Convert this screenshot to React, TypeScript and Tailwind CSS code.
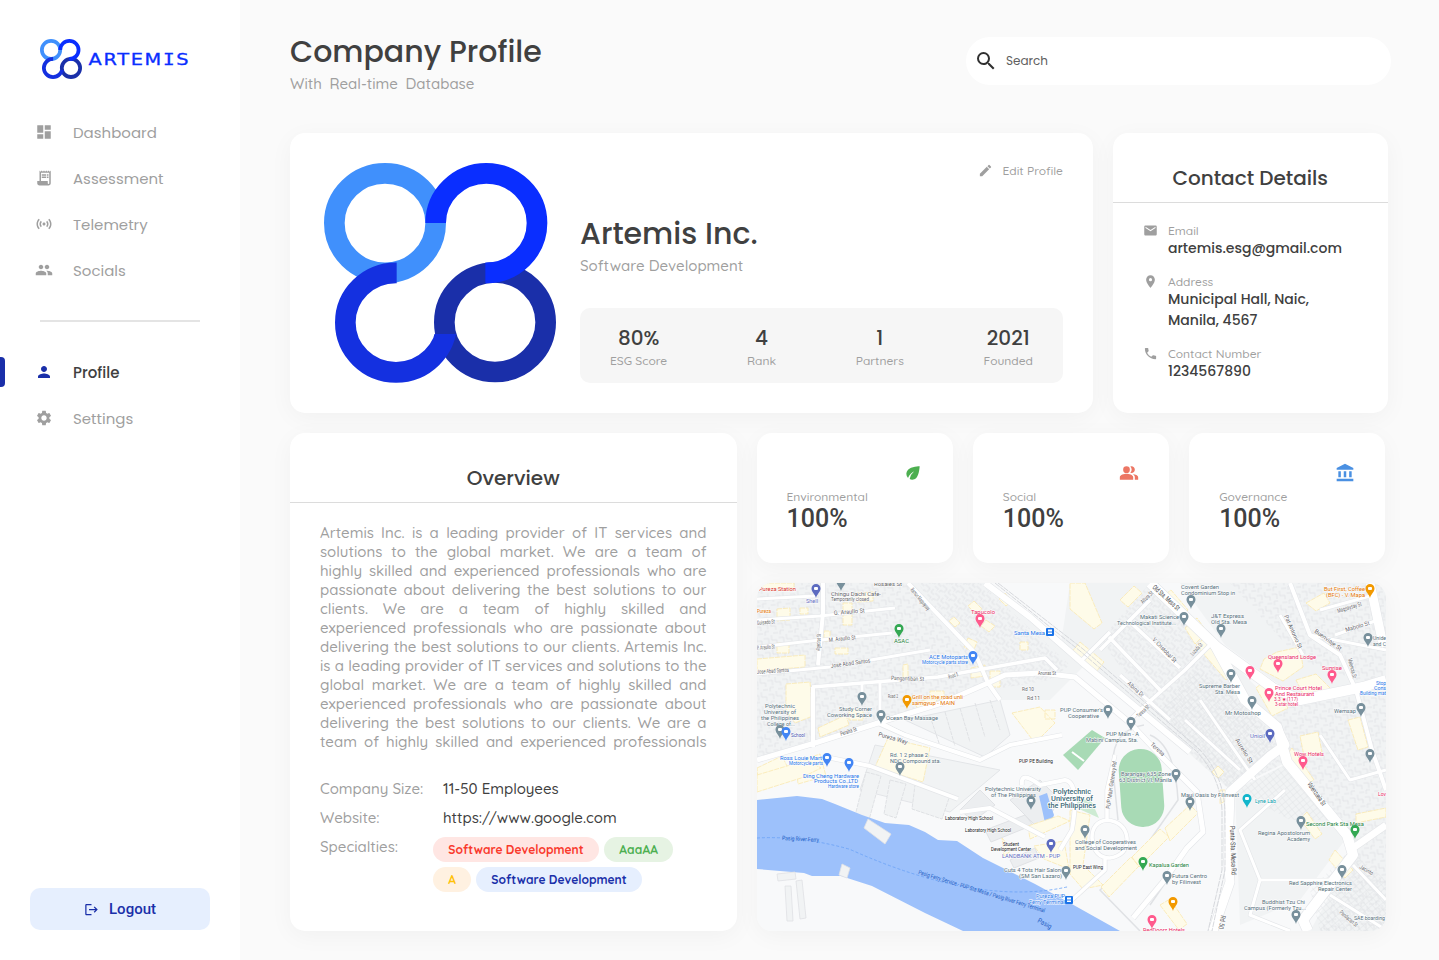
import React from "react";
import {
  MdDashboard, MdReceiptLong, MdSensors, MdPeople, MdPerson, MdSettings, MdSearch, MdEdit, MdEmail,
  MdLocationOn, MdPhone, MdEco, MdPeopleAlt, MdAccountBalance, MdLogout,
} from "react-icons/md";

const POP = "font-['Poppins','Inter',sans-serif]";
const QS = "font-['Quicksand','Lato',sans-serif]";
const CARD = "shrink-0 bg-white rounded-[15px] shadow-[0_5px_25px_rgba(0,0,0,0.04)]";

function Mark({ className, id }: { className: string; id: string }) {
  return (
    <svg className={className} viewBox="42 39 696 659" preserveAspectRatio="none" fill="none" strokeWidth="62">
      <defs>
        <clipPath id={id + "a"}><path d="M300 0H800V420H526V219H300Z" /></clipPath>
        <clipPath id={id + "b"}><path d="M0 300H260V551H800V720H0Z" /></clipPath>
      </defs>
      <ellipse cx="225" cy="219" rx="152" ry="149" stroke="#4090fc" />
      <ellipse cx="555" cy="516" rx="152" ry="149" stroke="#1a2fa9" />
      <ellipse cx="529" cy="219" rx="152" ry="149" stroke="#0a2eff" clipPath={`url(#${id}a)`} />
      <ellipse cx="258" cy="517" rx="152" ry="149" stroke="#1430e0" clipPath={`url(#${id}b)`} />
    </svg>
  );
}

type NavProps = { icon: React.ReactNode; label: string; active?: boolean };
function NavItem({ icon, label, active }: NavProps) {
  return (
    <div className={"relative flex h-[46px] items-center pl-[35px] text-[15px] " + (active ? "font-medium text-[#404040]" : "text-[#9f9f9f]")}>
      {active && <span className="absolute left-0 top-2 h-[30px] w-[5px] rounded-r-[4px] bg-[#1a2fa9]" />}
      <span className={"w-[38px] text-[18px] " + (active ? "text-[#1a2fa9]" : "")}>{icon}</span>
      <span className={POP + " pt-[3px]"}>{label}</span>
    </div>
  );
}

const stats = [["80%", "ESG Score"], ["4", "Rank"], ["1", "Partners"], ["2021", "Founded"]];

const overview = [
  "Artemis Inc. is a leading provider of IT services and",
  "solutions to the global market. We are a team of",
  "highly skilled and experienced professionals who are",
  "passionate about delivering the best solutions to our",
  "clients. We are a team of highly skilled and",
  "experienced professionals who are passionate about",
  "delivering the best solutions to our clients. Artemis Inc.",
  "is a leading provider of IT services and solutions to the",
  "global market. We are a team of highly skilled and",
  "experienced professionals who are passionate about",
  "delivering the best solutions to our clients. We are a",
  "team of highly skilled and experienced professionals",
];

const SLATE = "#546e7a", BLUE = "#1a73e8", PINK = "#e91e63", GREEN = "#188038", ORANGE = "#e37400", INDIGO = "#5c6bc0", GREY = "#5f6368";

/* text, x, y (baseline), width, colour, size, rotation */
type Label = [string, number, number, number, string, number?, number?];
const labels: Label[] = [
  ["Pureza Station", 759, 591, 37, "#d93025"],
  ["Shell", 806, 603, 12, INDIGO],
  ["Chingu Dachi Cafe-", 831, 596, 50, GREY],
  ["Temporarily closed", 831, 601, 38, GREY, 5],
  ["Pureza", 757, 613, 14, ORANGE],
  ["G. Araullo St", 834, 615, 31, GREY, 6, -5],
  ["Guisado St", 757, 625, 18, GREY, 6, -5],
  ["M. Araullo St", 829, 642, 27, GREY, 6, -6],
  ["P. Araullo St", 757, 650, 18, GREY, 6, -5],
  ["Jose Abad Santos", 831, 668, 40, GREY, 6, -8],
  ["Jose Abad Santos", 757, 674, 32, GREY, 6, -4],
  ["Algeciras St", 820, 651, 17, GREY, 6, -87],
  ["Pangantiban St", 891, 680, 33, GREY, 6, 2],
  ["Road 5", 949, 679, 10, GREY, 6, -18],
  ["Road 2", 888, 698, 10, GREY, 6],
  ["Peralta St", 841, 736, 17, GREY, 6, -18],
  ["Anonas St", 1038, 675, 18, GREY, 6],
  ["Rd 10", 1022, 691, 12, GREY, 6],
  ["Rd 11", 1027, 700, 13, GREY, 6],
  ["Ramon Magsaysay", 910, 590, 27, GREY, 6, 50],
  ["Rosales St", 874, 586, 28, GREY, 6],
  ["ASAC", 894, 643, 15, GREEN],
  ["Tapucolo", 971, 614, 24, PINK],
  ["Santa Mesa", 1014, 635, 31, BLUE],
  ["ACE Motoparts", 929, 659, 39, BLUE],
  ["Motorcycle parts store", 922, 664, 46, BLUE, 5],
  ["Polytechnic", 765, 708, 30, SLATE],
  ["University of", 764, 714, 32, SLATE],
  ["the Philippines", 761, 720, 38, SLATE],
  ["College of...", 767, 726, 28, SLATE],
  ["School", 791, 737, 14, "#3949ab"],
  ["Study Corner", 839, 711, 33, SLATE],
  ["Coworking Space", 827, 717, 45, SLATE],
  ["Grill on the road unli", 912, 699, 51, ORANGE],
  ["samgyup - MAIN", 912, 705, 43, ORANGE],
  ["Ocean Bay Massage", 886, 720, 52, SLATE],
  ["Ross Louie Mart", 780, 760, 42, BLUE],
  ["Motorcycle parts", 789, 765, 34, BLUE, 5],
  ["Ding Cheng Hardware", 803, 778, 56, BLUE],
  ["Products Co.,LTD", 814, 783, 44, BLUE],
  ["Hardware store", 828, 788, 31, BLUE, 5],
  ["Rd. 1 2 phase 2", 890, 757, 38, SLATE],
  ["NDC Compound sta.", 890, 763, 51, SLATE],
  ["PUP PE Building", 1019, 763, 34, "#202124", 5],
  ["Polytechnic University", 985, 791, 56, SLATE],
  ["of The Philippines", 991, 797, 45, SLATE],
  ["Laboratory High School", 945, 820, 48, "#202124", 5],
  ["Laboratory High School", 965, 832, 46, "#202124", 5],
  ["Student", 1003, 846, 16, "#202124", 5],
  ["Development Center", 991, 851, 40, "#202124", 5],
  ["LANDBANK ATM - PUP", 1002, 858, 58, INDIGO],
  ["Cuts 4 Tots Hair Salon", 1004, 872, 57, SLATE],
  ["(SM San Lazaro)", 1019, 878, 43, SLATE],
  ["Pureza PUP", 1036, 898, 29, BLUE],
  ["Ferry Terminal", 1029, 904, 36, BLUE],
  ["Pasig River Ferry", 782, 840, 37, "#2360c4", 6, 3],
  ["Pasig Ferry Service - PUP Sta Mesa / Pasig River Ferry Terminal", 918, 874, 132, "#2360c4", 6, 17],
  ["Pasig", 1037, 922, 15, "#2360c4", 7, 28],
  ["Covent Garden", 1181, 589, 38, SLATE],
  ["Condominium Stop in", 1181, 595, 54, SLATE],
  ["Makati Science", 1140, 619, 39, SLATE],
  ["Technological Institute...", 1117, 625, 59, SLATE],
  ["J&T Express", 1211, 618, 33, SLATE],
  ["Old Sta. Mesa", 1211, 624, 36, SLATE],
  ["But First, Coffee", 1324, 591, 41, ORANGE],
  ["(BFC) - V. Mapa", 1326, 597, 39, ORANGE],
  ["Old Sta. Mesa St", 1152, 588, 34, "#3c4043", 7, 42],
  ["Altura St", 1143, 604, 15, GREY, 6, -45],
  ["V. Cristobal St", 1152, 640, 32, GREY, 6, 46],
  ["Lozada St", 1193, 656, 15, GREY, 6, -48],
  ["Albina Dr", 1127, 684, 20, GREY, 6, 42],
  ["Teresa St", 1139, 718, 15, GREY, 6, -45],
  ["Magsaysay St", 1338, 613, 25, GREY, 6, -17],
  ["Mabolo St", 1346, 632, 25, GREY, 6, -17],
  ["Pat Antonio St", 1284, 616, 36, GREY, 6, 66],
  ["Buenviaje St", 1314, 632, 32, GREY, 6, 36],
  ["Valencia St", 1348, 659, 20, GREY, 6, 76],
  ["Unide", 1373, 640, 13, SLATE],
  ["and C", 1373, 646, 13, SLATE],
  ["Queensland Lodge", 1268, 659, 48, PINK],
  ["Sunrise", 1322, 670, 20, PINK],
  ["Supreme Barber", 1199, 688, 41, SLATE],
  ["Sta. Mesa", 1215, 694, 25, SLATE],
  ["Prince Court Hotel", 1275, 690, 47, PINK],
  ["And Restaurant", 1275, 696, 39, PINK],
  ["3.3 ★ (117)", 1274, 701, 24, PINK, 5],
  ["3-star hotel", 1275, 706, 23, PINK, 5],
  ["Mr Motoshop", 1225, 715, 36, SLATE],
  ["Wemsap", 1334, 713, 22, SLATE],
  ["Stop", 1376, 685, 10, BLUE],
  ["Cons", 1374, 690, 12, BLUE],
  ["Building mat", 1360, 695, 26, BLUE, 5],
  ["PUP Consumer's", 1060, 712, 43, SLATE],
  ["Cooperative", 1068, 718, 31, SLATE],
  ["PUP Main - A", 1106, 736, 33, SLATE],
  ["Mabini Campus, Sta.", 1086, 742, 52, SLATE],
  ["Unioil", 1250, 738, 15, INDIGO],
  ["Wow Hotels", 1294, 756, 30, PINK],
  ["Barangay 635 Zone", 1121, 776, 50, SLATE],
  ["63 District VI, Manila", 1119, 782, 53, SLATE],
  ["Maui Oasis by Filinvest", 1181, 797, 58, SLATE],
  ["Lyne Lab", 1255, 803, 21, "#0097a7"],
  ["Lov", 1378, 796, 8, PINK],
  ["PUP Main Gateway Rd", 1110, 809, 48, GREY, 6, -82],
  ["Punta-Sta. Mesa Rd", 1230, 826, 49, "#3c4043", 7, 88],
  ["Valenzuela St", 1307, 784, 27, "#3c4043", 7, 55],
  ["Second Park Sta Mesa", 1306, 826, 58, GREEN],
  ["Regina Apostolorum", 1258, 835, 52, SLATE],
  ["Academy", 1287, 841, 23, SLATE],
  ["College of Cooperatives", 1075, 844, 61, SLATE],
  ["and Social Development", 1075, 850, 62, SLATE],
  ["Kapalua Garden", 1149, 867, 40, GREEN],
  ["PUP East Wing", 1073, 869, 30, "#202124", 5],
  ["Futura Centro", 1172, 878, 35, SLATE],
  ["by Filinvest", 1172, 884, 29, SLATE],
  ["Red Sapphire Electronics", 1289, 885, 63, SLATE],
  ["Repair Center", 1318, 891, 34, SLATE],
  ["Buddhist Tzu Chi", 1262, 904, 43, SLATE],
  ["Campus (Formerly Tzu...", 1244, 910, 62, SLATE],
  ["SAE boarding", 1354, 920, 31, SLATE],
  ["RedDoorz Hotels", 1143, 932, 42, PINK],
  ["Pandacan St", 1339, 913, 22, GREY, 6, 40],
  ["Rd 50", 1221, 915, 14, GREY, 7, 100],
  ["Jacinto", 1359, 868, 15, GREY, 6, 30],
  ["Aurelio St", 1235, 740, 28, GREY, 6, 58],
  ["Teresa", 1150, 745, 17, GREY, 6, 42],
  ["Pureza Way", 878, 736, 30, GREY, 6, 16],
];

const pins: [number, number, string][] = [
  [816, 591, INDIGO], [841, 584, "#78909c"], [899, 631, "#34a853"], [980, 621, "#ff5a8d"], [973, 658, "#4285f4"],
  [862, 699, "#78909c"], [907, 702, "#f29900"], [881, 717, "#78909c"], [780, 732, "#78909c"], [786, 734, "#4285f4"],
  [827, 760, "#4285f4"], [849, 765, "#4285f4"], [900, 769, "#78909c"], [1031, 803, "#78909c"], [1051, 846, INDIGO],
  [1066, 873, "#78909c"], [1191, 602, "#78909c"], [1184, 619, "#78909c"], [1221, 631, "#78909c"], [1370, 591, "#f29900"],
  [1368, 640, "#78909c"], [1278, 666, "#ff5a8d"], [1250, 673, "#ff5a8d"], [1332, 677, "#ff5a8d"], [1231, 676, "#78909c"],
  [1269, 695, "#ff5a8d"], [1252, 703, "#78909c"], [1361, 710, "#78909c"], [1270, 736, INDIGO], [1108, 712, "#78909c"],
  [1131, 724, "#78909c"], [1303, 763, "#ff5a8d"], [1370, 756, "#78909c"], [1176, 776, "#78909c"], [1190, 804, "#78909c"],
  [1247, 801, "#12b5cb"], [1301, 823, "#78909c"], [1355, 832, "#34a853"], [1085, 832, "#78909c"], [1143, 864, "#34a853"],
  [1167, 878, "#78909c"], [1342, 872, "#78909c"], [1296, 917, "#78909c"], [1173, 904, "#f29900"], [1152, 922, "#ff5a8d"],
];

const buildings = [
  "M757 583h37v5h-37zM777 609l13-1v12l-13 1zM800 608l8 0v6l-8 0zM843 603l9 0v22l-9 0zM857 593l16-1v9l-16 1zM824 631h6v10h-6zM835 648h13v6h-13z",
  "M757 659l48-4v12l-48 4zM777 643h12v10h-12zM757 768l25-12 10 20-33 12zM796 762l24-8 6 22-28 8zM786 684l24-2 3 34-18 7-9-12z",
  "M818 728l28-13 3 10-29 12zM849 710h14v10h-14zM757 775l50-15 14 8-20 10-44 14zM888 738l42 10-7 34-48-15z",
  "M903 665l5-1v13l-5 1zM915 703l20-6 4 9-20 6zM954 617l6 6-5 4-6-6zM974 601l8 8-6 5-8-8zM986 620l9 6-6 6-8-6zM1020 642h8v8h-8z",
  "M968 638l9 4-4 10-9-5zM971 668l14-3v11l-14 2zM930 691h14v8h-14zM990 671h10v16h-10zM999 599l6-6 7 8-6 5z",
  "M1012 713l28-6 15 16-20 20zM1045 710h10v9h-10zM1070 583h15l17 40-8 6-24-20zM1196 645l10-8 28 35-8 8zM1161 598l10-8 17 20-8 8zM1185 628l12-10 10 14-12 12z",
  "M1277 652l23-5 3 20-20 14-23-12 4-10zM1256 688l12-10 20 30-16 8zM1296 680l20-6 18 18-27 10zM1306 603l18-10 6 10-14 8z",
  "M1300 736l18-4 4 20-18 4zM1348 720l12-3 8 30-10 3zM1285 757l17 30 12-7-22-32zM1307 812l15 22-7 5-15-20z",
  "M1070 810l20 5-7 50 20 20-20 4-13-15zM1165 828l25-23 8 8-28 28zM1132 857l28-28 9 8-30 30zM1101 887l30-30 8 9-30 31z",
  "M1160 905l10-6 17 25-8 6zM1356 814l30-6v9l-30 6zM1028 826l30-10 12 5-40 18zM1034 846l30-5 5 28-25-10zM1002 838l10 12-8 6z",
  "M1212 772l6-6 6 6-6 6zM1220 790l10 0v8l-10 6zM1080 642l24 20-8 10-26-18zM1120 600l14-14 8 7-14 14zM1335 850l18 20-8 8-16-18z",
];

const roads: [string, number][] = [
  ["M823 583V613L818 665", 4], ["M908 583L975 653L988 683L1000 700", 4],
  ["M757 760L815 743L878 723L942 703L988 683L1005 675L1040 673L1075 677L1130 723L1160 755L1197 792L1203 832L1187 848L1163 882L1133 918", 5],
  ["M812 687L938 677L1045 658L1057 670", 3.5], ["M813 747V687", 4], ["M862 683V700M880 680V722L905 735", 3],
  ["M757 620L820 616L895 608M757 647L820 640L892 633M757 674L830 667L900 655L930 650M757 599L815 596", 3],
  ["M985 583L1030 617L1085 665L1190 752", 6], ["M1150 583L1217 647L1273 688L1300 700L1363 687L1386 680", 10],
  ["M1215 645L1245 700L1277 727L1287 762L1347 835L1353 855L1303 920L1308 931", 10],
  ["M1277 728L1285 745L1270 756L1230 792L1228 855L1230 882L1213 931", 9], ["M1353 848L1386 825", 7],
  ["M1370 583L1382 640L1386 645", 9], ["M1290 583L1310 635L1340 655L1356 690L1372 750L1386 790", 4],
  ["M1310 635L1386 650M1320 610L1370 596M1335 635L1378 620M1280 615L1303 655", 3],
  ["M1210 645L1185 670L1140 710L1128 722M1150 600L1100 650M1130 622L1180 668M1109 637L1160 690M1120 675L1170 720M1082 660L1110 632", 3.5],
  ["M826 757L870 766L958 799M878 723L905 735L980 760L1010 745L1062 735", 4],
  ["M960 812L990 808L1045 837M1022 785Q1020 770 1040 785L1065 780Q1080 782 1072 830L1060 850", 4],
  ["M1107 820Q1092 822 1092 838Q1094 858 1110 858Q1128 855 1127 838Q1125 822 1107 820M1107 820L1107 790L1115 755M1105 858V870L1072 900", 3.5],
  ["M1200 700L1255 780M1185 720L1240 770M1285 790L1240 830L1260 880L1330 880M1320 735L1350 780L1386 770M1353 865L1386 900M1330 895L1386 930M1260 880L1250 915L1290 931", 3],
];

function GlyphPin({ x, y, c }: { x: number; y: number; c: string }) {
  return (
    <g transform={`translate(${x} ${y})`}>
      <path d="M0 7C-1 3-4.500 1-4.500-2.500A4.500 4.500 0 1 1 4.500-2.500C4.500 1 1 3 0 7Z" fill={c} />
      <rect x="-2" y="-4" width="4" height="3" rx="1" fill="#fff" />
    </g>
  );
}

function CityMap() {
  return (
    <svg className="block h-[348px] w-[629px] shrink-0 rounded-[15px] shadow-[0_5px_25px_rgba(0,0,0,0.04)]" viewBox="757 583 629 348" fontFamily="Roboto, sans-serif">
      <defs>
        <pattern id="blk" width="15" height="14" patternUnits="userSpaceOnUse" patternTransform="rotate(-5)">
          <path d="M0 3h5v5M8 0v5h5v4M2 14v-4h4M10 12h5" fill="none" stroke="#dfe1e4" strokeWidth=".8" />
        </pattern>
        <pattern id="diag" width="13" height="11" patternUnits="userSpaceOnUse" patternTransform="rotate(42)">
          <path d="M0 2h6v5M9 0v4h4M2 10v-3h3M8 8h5v3" fill="none" stroke="#dfe1e4" strokeWidth=".8" />
        </pattern>
        <pattern id="fine" width="5" height="5" patternUnits="userSpaceOnUse" patternTransform="rotate(50)">
          <path d="M0 0h5M0 0v5" stroke="#dfe1e4" strokeWidth=".8" />
        </pattern>
      </defs>
      <rect x="757" y="583" width="629" height="348" fill="#f8f9fa" />
      <path d="M757 583H908L975 653L988 683L942 703L813 747L757 760Z" fill="#f1f3f4" />
      <path d="M757 583H908L975 653L988 683L942 703L813 747L757 760Z" fill="url(#blk)" />
      <path d="M908 583H985L1085 665L1050 700L1000 700Z" fill="#f1f3f4" />
      <path d="M918 583H980L1070 665L1050 680L990 690Z" fill="url(#diag)" />
      <path d="M1070 583H1150L1270 700L1287 762L1230 790L1180 745L1060 650Z" fill="#f1f3f4" />
      <path d="M1100 640L1150 583L1250 700L1287 762L1230 790L1180 745Z" fill="url(#diag)" />
      <path d="M1160 710L1195 670L1240 700L1280 755L1230 790Z" fill="url(#fine)" />
      <path d="M1180 583H1386V690L1300 700L1225 645Z" fill="#f1f3f4" />
      <path d="M1230 583H1386V690L1300 660Z" fill="url(#blk)" />
      <path d="M1250 700L1386 690V931H1310L1353 855L1287 762Z" fill="#f1f3f4" />
      <path d="M1270 710L1386 690V931H1320L1353 855L1287 762Z" fill="url(#blk)" />
      <path d="M1235 790L1285 765L1345 840L1300 900L1240 925Z" fill="#f1f3f4" />
      <path d="M1235 790L1285 765L1330 820L1290 820Z" fill="url(#fine)" />
      <path d="M1310 890L1350 850L1386 880V931H1320Z" fill="url(#fine)" />
      <path d="M875 745L1000 770L950 812L860 790ZM905 720L1000 700L1010 735L985 757Z" fill="#f1f3f4" stroke="#e3e5e8" />
      <path d="M866 772l15 4-12 44-14-4zM890 780l16 4-10 34-12-4zM915 785l35 10-8 24-30-10zM930 716l10 30M945 712l10 34M960 708l10 34M975 703l10 34M990 700l10 30" fill="#f1f3f4" stroke="#dfe1e4" strokeDasharray="4 1" />
      <path d="M1010 800L1040 780L1060 800L1040 830ZM985 830l40-15 8 10-42 17zM1010 860l25-12 4 10-25 10zM960 810l20-20 15 15-22 16z" fill="#eceef0" stroke="#e0e2e5" />
      <path d="M757 800L797 796L822 799L835 804L862 815L885 823L909 825L925 832L938 840L957 841L983 858L1035 884L1070 903L1120 931H963L925 913L872 886L841 876L812 876L804 873L757 869Z" fill="#9dc1fb" />
      <path d="M1039 796l8-3 3 10 4 12-4 10-5-2-3-14z" fill="#9dc1fb" />
      <path d="M868 819l23 15-6 10-21-16zM842 864l8 4-3 10-8-3zM777 874l18-2 1 7-18 2zM785 886h6l2 35h-6zM796 881l6-1 4 38-6 1z" fill="#f1f3f4" stroke="#dfe1e4" strokeWidth=".8" />
      <path d="M757 864Q800 860 850 872Q980 925 1069 902" transform="translate(0 -26) rotate(2 757 864)" fill="none" stroke="#6ba2f6" strokeDasharray="3 2" strokeWidth=".8" />
      <path d="M1092 730l13 8-27 32-15-15z" fill="#a8dab5" />
      <path d="M1073 798l18 2 8 18-22-10z" fill="#cdebd3" />
      <path d="M1072 752l12 9" stroke="#fff" strokeWidth="2" />
      <rect x="1120" y="749" width="43" height="78" rx="21" fill="#a8dab5" transform="rotate(-4 1141 788)" />
      <path d="M1144 725Q1110 730 1113 770L1118 820M1150 735Q1175 745 1178 800L1150 840M1174 870L1150 905M1130 865L1100 890L1140 931" fill="none" stroke="#e0e2e5" strokeWidth="1.500" />
      {buildings.map((d, i) => <path key={i} d={d} fill="#fefbe9" stroke="#fae8b0" strokeWidth=".8" strokeDasharray="5 1" />)}
      {roads.map(([d, w], i) => <path key={"c" + i} d={d} fill="none" stroke="#e4e6e9" strokeWidth={w + 1.2} strokeLinejoin="round" />)}
      {roads.map(([d, w], i) => <path key={"r" + i} d={d} fill="none" stroke="#fff" strokeWidth={w} strokeLinejoin="round" />)}
      <path d="M995 583L1080 651L1195 750Q1220 775 1222 810L1222 870L1208 931M998 583L1083 649L1198 748Q1223 773 1225 810L1225 870L1212 931" fill="none" stroke="#d2d5d9" strokeWidth=".9" strokeDasharray="6 1" />
      {labels.map(([t, x, y, w, c, s, r], i) => (
        <text key={i} x={x} y={y} fill={c} fontSize={s ?? 6.200} textLength={w} lengthAdjust="spacingAndGlyphs" stroke={y > 832 && x < 1040 && c === "#2360c4" ? "none" : "#fff"} strokeWidth="1" paintOrder="stroke" transform={r ? `rotate(${r} ${x} ${y})` : undefined}>{t}</text>
      ))}
      <g fill="#406b78" fontSize="7" fontWeight="500" stroke="#fff" strokeWidth="1.500" paintOrder="stroke">
        <text x="1053" y="794" textLength="38" lengthAdjust="spacingAndGlyphs">Polytechnic</text>
        <text x="1051" y="801" textLength="42" lengthAdjust="spacingAndGlyphs">University of</text>
        <text x="1048" y="808" textLength="48" lengthAdjust="spacingAndGlyphs">the Philippines</text>
      </g>
      {pins.map(([x, y, c], i) => <GlyphPin key={i} x={x} y={y} c={c} />)}
      {[[1050, 632], [1069, 900]].map(([x, y]) => (
        <g key={x}><rect x={x - 4} y={y - 4} width="8" height="8" rx="1" fill="#1a73e8" /><rect x={x - 2} y={y - 2.500} width="4" height="2" fill="#fff" /><rect x={x - 2} y={y + .5} width="4" height="1.500" fill="#fff" /></g>
      ))}
    </svg>
  );
}

function Contact({ icon, label, children }: { icon: React.ReactNode; label: string; children: React.ReactNode }) {
  return (
    <div className="flex">
      <span className="w-[25px] text-[15px] text-[#9f9f9f]">{icon}</span>
      <div>
        <div className={QS + " text-[12px] leading-[15px] font-medium text-[#9f9f9f]"}>{label}</div>
        <div className={POP + " text-[14px] leading-[21px] font-medium text-[#404040]"}>{children}</div>
      </div>
    </div>
  );
}

function Score({ icon, label }: { icon: React.ReactNode; label: string }) {
  return (
    <div className={CARD + " flex h-[130px] w-[196.33px] flex-col px-[30px] pt-[30px]"}>
      <div className="flex h-[26px] justify-end text-[20px]">{icon}</div>
      <div className={QS + " text-[12px] leading-[15px] font-medium text-[#9f9f9f]"}>{label}</div>
      <div className="pt-px font-['Roboto',sans-serif] text-[25px] leading-[27px] font-medium text-[#404040]">100%</div>
    </div>
  );
}

export default function App() {
  return (
    <div className="flex h-[960px] w-[1439px] overflow-hidden bg-[#fafafa]">
      <aside className="flex w-[240px] shrink-0 flex-col bg-white">
        <div className="flex h-[109px] items-start pl-[40px] pt-[39px]">
          <Mark className="h-[40px] w-[42px]" id="s" />
          <svg className="ml-[6px] mt-[12px] h-[18px] w-[102px]" viewBox="0 0 102 18">
            <g transform="scale(1.25 1)">
              <text x=".5" y="14" fontSize="15.500" fill="#0a2eff" stroke="#0a2eff" strokeWidth=".3" textLength="80" fontFamily="DejaVu Sans">ARTEM<tspan fontFamily="DejaVu Sans Mono">I</tspan>S</text>
            </g>
          </svg>
        </div>
        <nav>
          <NavItem icon={<MdDashboard />} label="Dashboard" />
          <NavItem icon={<MdReceiptLong />} label="Assessment" />
          <NavItem icon={<MdSensors />} label="Telemetry" />
          <NavItem icon={<MdPeople />} label="Socials" />
          <div className="mx-[40px] mt-[27px] mb-[27px] h-[2px] bg-[#e4e4e4]" />
          <NavItem icon={<MdPerson />} label="Profile" active />
          <NavItem icon={<MdSettings />} label="Settings" />
        </nav>
        <button className="mx-[30px] mt-auto mb-[30px] flex h-[42px] items-center justify-center gap-[10px] rounded-[10px] bg-[#e6effe] font-['Roboto',sans-serif] text-[15px] font-medium text-[#1a2fa9]">
          <MdLogout className="text-[15px]" />Logout
        </button>
      </aside>

      <main className="w-[1151px] shrink-0 pl-[50px] pt-[33px]">
        <header className="flex h-[100px] justify-between">
          <div>
            <h1 className={POP + " text-[30px] leading-[38px] font-medium text-[#404040]"}>Company Profile</h1>
            <p className={QS + " pt-[3px] text-[15px] leading-[19px] font-medium text-[#9f9f9f] [word-spacing:3.5px]"}>With Real-time Database</p>
          </div>
          <div className="mt-[4px] flex h-[48px] w-[425px] items-center rounded-full bg-white pl-[8px]">
            <MdSearch className="text-[24px] text-[#303030]" />
            <span className={POP + " pl-[8px] text-[12px] text-[#606060]"}>Search</span>
          </div>
        </header>

        <div className="flex gap-[20px]">
          <section className={CARD + " flex h-[280px] w-[803px] pl-[34px] pt-[30px] pr-[30px]"}>
            <Mark className="h-[220px] w-[232px] shrink-0" id="l" />
            <div className="ml-[24px] flex flex-1 flex-col">
              <div className={QS + " flex h-[15px] items-center justify-end gap-[10px] text-[12px] font-medium text-[#9f9f9f]"}>
                <MdEdit className="text-[15px]" />Edit Profile
              </div>
              <h2 className={POP + " mt-[37px] text-[30px] leading-[38px] font-medium text-[#404040]"}>Artemis Inc.</h2>
              <p className={QS + " mt-[3px] text-[15px] leading-[19px] font-medium text-[#9f9f9f]"}>Software Development</p>
              <div className="mt-[33px] flex h-[75px] justify-between rounded-[10px] bg-[#f6f6f6] px-[30px] pt-[17px]">
                {stats.map(([n, l]) => (
                  <div key={l} className="text-center">
                    <div className={POP + " text-[20px] leading-[27px] font-medium text-[#404040]"}>{n}</div>
                    <div className={QS + " text-[12px] leading-[17px] font-medium text-[#9f9f9f]"}>{l}</div>
                  </div>
                ))}
              </div>
            </div>
          </section>
          <section className={CARD + " h-[280px] w-[274.5px]"}>
            <h3 className={POP + " flex h-[70px] items-end justify-center border-b border-[#dcdcdc] pb-[9px] text-[20px] leading-[30px] font-medium text-[#404040]"}>Contact Details</h3>
            <div className="flex flex-col gap-[15px] pl-[30px] pt-[20px]">
              <Contact icon={<MdEmail />} label="Email">artemis.esg@gmail.com</Contact>
              <Contact icon={<MdLocationOn />} label="Address">Municipal Hall, Naic,<br />Manila, 4567</Contact>
              <Contact icon={<MdPhone />} label="Contact Number">1234567890</Contact>
            </div>
          </section>
        </div>

        <div className="mt-[20px] flex gap-[20px]">
          <section className={CARD + " h-[498px] w-[446.5px]"}>
            <h3 className={POP + " flex h-[70px] items-end justify-center border-b border-[#dcdcdc] pb-[9px] text-[20px] leading-[30px] font-medium text-[#404040]"}>Overview</h3>
            <div className={QS + " mx-[30px] mt-[20px] h-[228px] w-[386.5px] text-[15px] leading-[19px] font-medium text-[#9f9f9f]"}>
              {overview.map((l, i) => <p key={i} className="whitespace-nowrap [text-align-last:justify]">{l}</p>)}
            </div>
            <div className={QS + " mt-[28px] flex flex-col gap-[10px] pl-[30px] text-[15px] leading-[19px] font-medium text-[#9f9f9f]"}>
              <div className="flex"><span className="w-[123px]">Company Size:</span><span className="text-[#404040]">11-50 Employees</span></div>
              <div className="flex"><span className="w-[123px]">Website:</span><span className="text-[#404040]">https://www.google.com</span></div>
              <div className="flex">
                <span className="w-[113px]">Specialties:</span>
                <div className="flex w-[260px] flex-wrap gap-[5px] text-[12px] font-bold leading-[25px]">
                  <span className="w-[166px] rounded-full bg-[#ffe6e3] text-center text-[#f9392c]">Software Development</span>
                  <span className="w-[69px] rounded-full bg-[#e6f3e3] text-center text-[#4caf50]">AaaAA</span>
                  <span className="w-[38px] rounded-full bg-[#fff1e1] text-center text-[#ffc107]">A</span>
                  <span className="w-[166px] rounded-full bg-[#e6effe] text-center text-[#1a2fa9]">Software Development</span>
                </div>
              </div>
            </div>
          </section>
          <div className="flex w-[629px] shrink-0 flex-col gap-[20px]">
            <div className="flex gap-[20px]">
              <Score icon={<MdEco className="text-[#4caf50]" />} label="Environmental" />
              <Score icon={<MdPeopleAlt className="text-[#ec7664]" />} label="Social" />
              <Score icon={<MdAccountBalance className="text-[#4a90e2]" />} label="Governance" />
            </div>
            <CityMap />
          </div>
        </div>
      </main>
    </div>
  );
}
